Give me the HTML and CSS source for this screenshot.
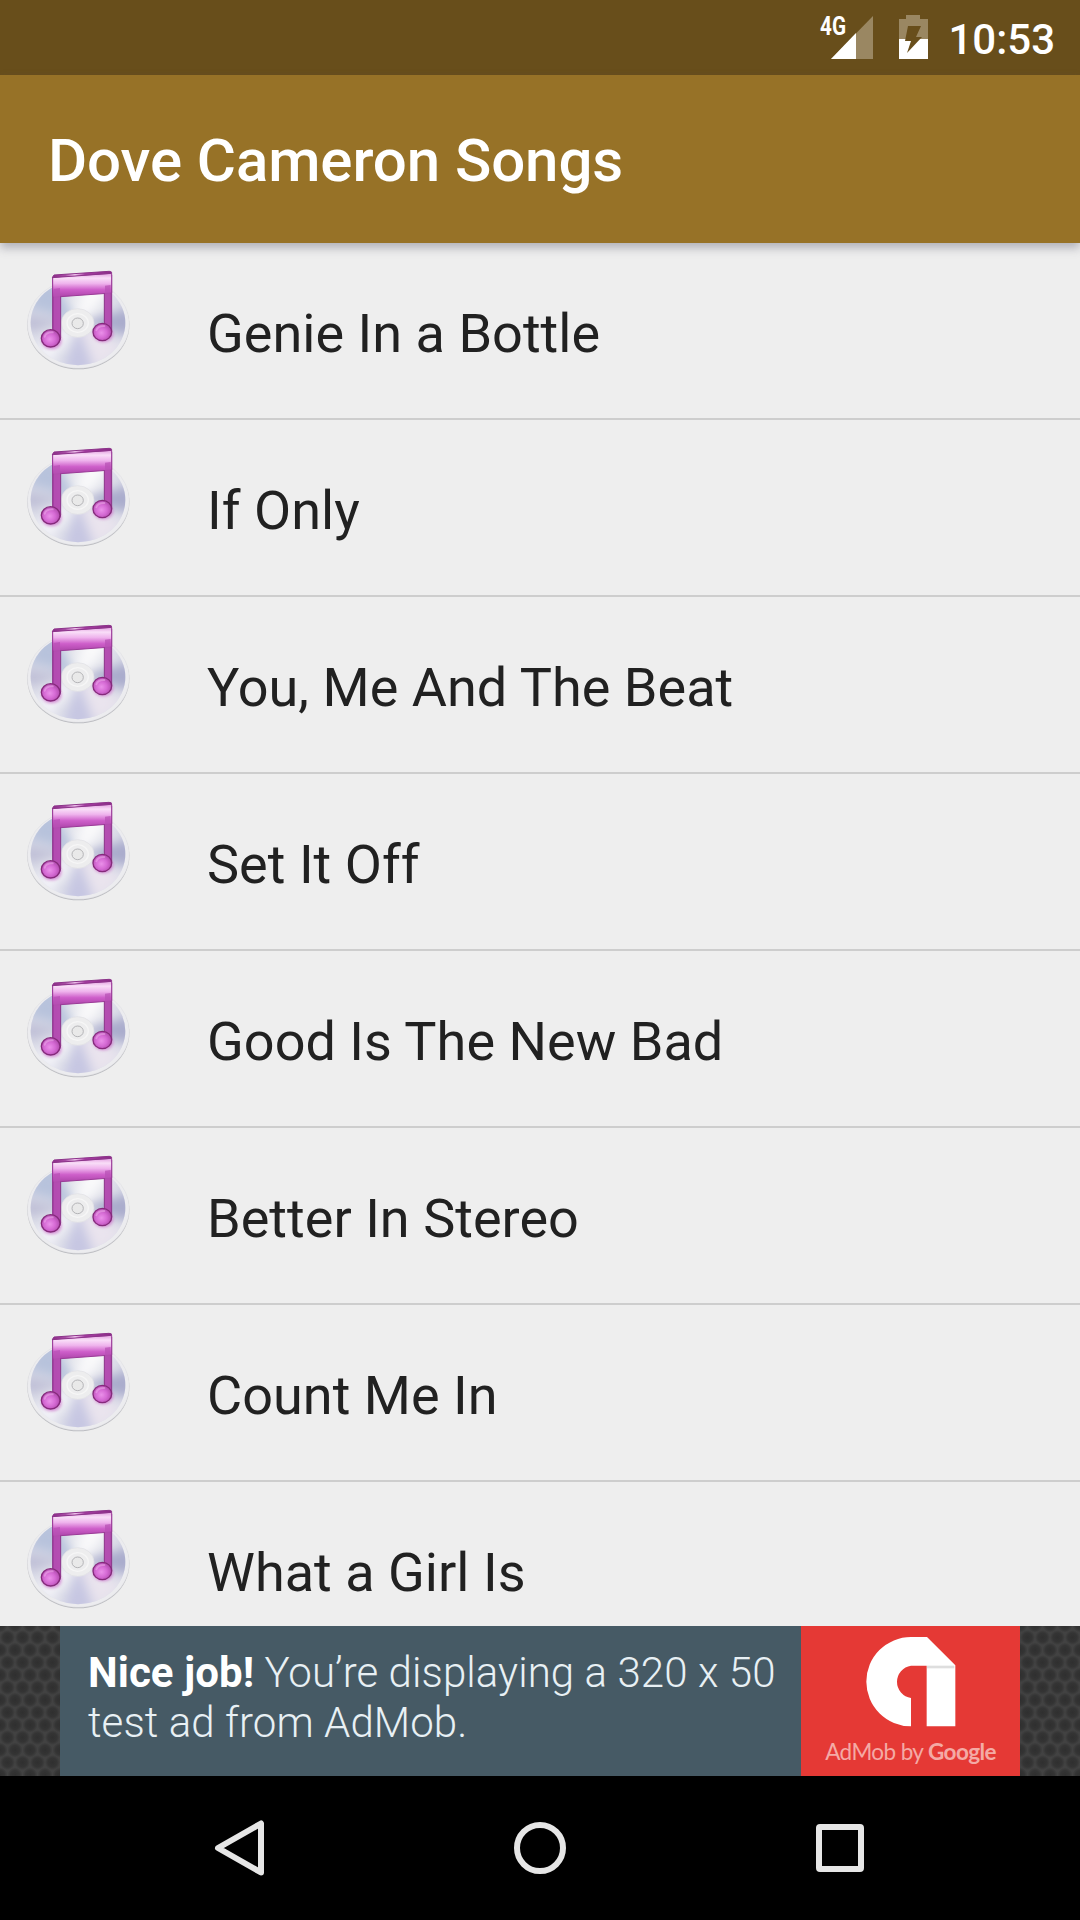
FILE: index.html
```html
<!DOCTYPE html>
<html lang="en">
<head>
<meta charset="utf-8">
<title>Dove Cameron Songs</title>
<link rel="stylesheet" href="styles.css">
</head>
<body>
<svg class="defs" aria-hidden="true">
  <defs>
    <radialGradient id="disc" cx="50%" cy="45%" r="55%">
      <stop offset="0" stop-color="#f4f4f6"/><stop offset=".45" stop-color="#e7e8ee"/><stop offset=".85" stop-color="#dadbe7"/><stop offset="1" stop-color="#dcdde8"/>
    </radialGradient>
    <linearGradient id="beam" x1="0" y1="0" x2="0" y2="1">
      <stop offset="0" stop-color="#e3a0e0"/><stop offset=".2" stop-color="#f9def8"/><stop offset=".42" stop-color="#efb4ed"/><stop offset=".68" stop-color="#ce5fca"/><stop offset="1" stop-color="#ab43a8"/>
    </linearGradient>
    <linearGradient id="edge" x1="0" x2="1">
      <stop offset="0" stop-color="#8c2b88"/><stop offset=".22" stop-color="#a94ba5"/><stop offset=".38" stop-color="#f8d0f5"/><stop offset=".55" stop-color="#a83ca4"/><stop offset="1" stop-color="#8c2b88"/>
    </linearGradient>
    <linearGradient id="stem" x1="0" x2="1">
      <stop offset="0" stop-color="#a13a9f"/><stop offset=".5" stop-color="#c05cbf"/><stop offset="1" stop-color="#a0409d"/>
    </linearGradient>
    <radialGradient id="head" cx="45%" cy="55%" r="58%">
      <stop offset="0" stop-color="#ea90e9"/><stop offset=".5" stop-color="#d66bd5"/><stop offset="1" stop-color="#ad48aa"/>
    </radialGradient>
    <filter id="soft" x="-50%" y="-50%" width="200%" height="200%"><feGaussianBlur stdDeviation="16"/></filter>
    <filter id="glow" x="-50%" y="-50%" width="200%" height="200%"><feGaussianBlur stdDeviation="4"/></filter>
    <clipPath id="discClip"><ellipse cx="234" cy="249" rx="142" ry="127"/></clipPath>
    <symbol id="song" viewBox="0 9 480 525">
      <ellipse cx="235" cy="255" rx="153" ry="133" fill="#b9babf"/>
      <ellipse cx="235" cy="252" rx="153" ry="133" fill="#ececef" stroke="#d9d9dc" stroke-width="1"/>
      <ellipse cx="234" cy="249" rx="142" ry="127" fill="url(#disc)"/>
      <g clip-path="url(#discClip)">
        <g filter="url(#soft)">
          <path d="M234 249 75 200 120 130 160 115Z" fill="#b7c2dc"/>
          <path d="M234 249 70 225 70 275Z" fill="#bdbdd5"/>
          <path d="M234 249 190 400 285 400Z" fill="#c6c6e2"/>
          <path d="M234 249 400 200 400 290Z" fill="#a9abcc"/>
          <path d="M234 249 100 320 150 375Z" fill="#f3f3f8"/>
          <path d="M234 249 290 390 370 320Z" fill="#eae4ee"/>
          <path d="M234 249 360 130 250 100Z" fill="#fafafb"/>
        </g>
      </g>
      <ellipse cx="233" cy="249" rx="49" ry="43" fill="#ededee" stroke="#e0e0e4" stroke-width="2"/>
      <ellipse cx="233" cy="249" rx="32" ry="28" fill="none" stroke="#f6f6f6" stroke-width="4"/>
      <ellipse cx="233" cy="250" rx="17" ry="16" fill="#e9e9e9" stroke="#b4b4b7" stroke-width="3"/>
      <g fill="#ca75ca" opacity=".75" filter="url(#glow)">
        <ellipse cx="155" cy="303" rx="30" ry="25"/><ellipse cx="310" cy="283" rx="30" ry="24"/>
      </g>
      <path d="M158 112H182V294Q179 311 166 314L158 272ZM313 105H335V276Q331 294 320 294L313 253Z" fill="url(#stem)" stroke="#8c348a" stroke-width="3"/>
      <path d="M158 111 335 100V159L182 170 158 172Z" fill="url(#beam)" stroke="#9a3b97" stroke-width="3"/>
      <path d="M161 147 180 144V292H161ZM315 137 332 135V272H315Z" fill="#b852b6" opacity=".75"/>
      <path d="M157 113 162 105 327 94Q337 94 334 100Z" fill="url(#edge)" stroke="#8c348a" stroke-width="3"/>
      <ellipse cx="152" cy="295" rx="28" ry="26" fill="url(#head)" stroke="#852a7b" stroke-width="4"/>
      <ellipse cx="307" cy="276" rx="28" ry="26" fill="url(#head)" stroke="#852a7b" stroke-width="4"/>
      <path d="M134 290Q138 276 158 277M289 271Q293 257 313 258" fill="none" stroke="#f1b1ee" stroke-width="6" stroke-linecap="round" opacity=".5"/>
    </symbol>
    <radialGradient id="hole"><stop offset="0" stop-color="#2f2f2f"/><stop offset=".6" stop-color="#343434"/><stop offset="1" stop-color="#424242"/></radialGradient>
    <pattern id="mesh" width="15" height="25" patternUnits="userSpaceOnUse" patternTransform="translate(0 -1)">
      <rect width="15" height="25" fill="#424242"/>
      <g fill="url(#hole)"><circle cx="7.5" cy="12.5" r="7.500"/><circle cx="0" cy="0" r="7.500"/><circle cx="15" cy="0" r="7.500"/><circle cx="0" cy="25" r="7.500"/><circle cx="15" cy="25" r="7.500"/></g>
    </pattern>
  </defs>
</svg>
<header class="status-bar">
  <svg class="signal" width="54" height="44" viewBox="0 0 54 44">
    <path d="M53 1V44H11Z" fill="#9a8762"/><path d="M36 18V44H11Z" fill="#fff"/>
    <text class="network" x="0" y="19.500" textLength="26" lengthAdjust="spacingAndGlyphs">4G</text>
  </svg>
  <svg class="battery" width="29" height="44" viewBox="0 0 29 44">
    <path d="M0 4H7V0H21V4H29V24H0Z" fill="#9a8762"/><path d="M0 24H29V44H0Z" fill="#fff"/>
    <path d="M9 11H22L17 22H23L8 38 12 26H6Z" fill="#684e1b"/>
  </svg>
  <span class="time">10:53</span>
</header>
<div class="app-bar"><h1 class="title">Dove Cameron Songs</h1></div>
<ul class="songs">
  <li class="song"><svg class="icon"><use href="#song"/></svg><span class="name">Genie In a Bottle</span></li>
  <li class="song"><svg class="icon"><use href="#song"/></svg><span class="name">If Only</span></li>
  <li class="song"><svg class="icon"><use href="#song"/></svg><span class="name">You, Me And The Beat</span></li>
  <li class="song"><svg class="icon"><use href="#song"/></svg><span class="name">Set It Off</span></li>
  <li class="song"><svg class="icon"><use href="#song"/></svg><span class="name">Good Is The New Bad</span></li>
  <li class="song"><svg class="icon"><use href="#song"/></svg><span class="name">Better In Stereo</span></li>
  <li class="song"><svg class="icon"><use href="#song"/></svg><span class="name">Count Me In</span></li>
  <li class="song"><svg class="icon"><use href="#song"/></svg><span class="name">What a Girl Is</span></li>
</ul>
<aside class="ad">
  <svg class="mesh" width="60" height="150"><rect width="60" height="150" fill="url(#mesh)"/></svg>
  <p class="message"><span class="line"><b class="strong">Nice job!</b> You’re displaying a 320 x 50</span><span class="line">test ad from AdMob.</span></p>
  <div class="brand">
    <svg class="logo" width="90" height="90" viewBox="0 0 270 270">
      <path d="M135 0H183L268 85V268H182V86H135A49 49 0 0 0 135 183V268A134 134 0 0 1 135 0Z" fill="#fff"/>
      <path d="M183 86H265V94H183Z" fill="#dedede"/>
    </svg>
    <p class="credit">AdMob by <span class="google">Google</span></p>
  </div>
  <svg class="mesh" width="60" height="150"><rect width="60" height="150" fill="url(#mesh)"/></svg>
</aside>
<nav class="nav-bar">
  <svg class="key" width="60" height="60" viewBox="0 0 60 60"><path d="M8 30 51 5.500V54.500Z"/></svg>
  <svg class="key" width="60" height="60" viewBox="0 0 60 60"><circle cx="30" cy="30" r="23"/></svg>
  <svg class="key" width="60" height="60" viewBox="0 0 60 60"><rect x="9" y="9" width="42" height="42" rx="1"/></svg>
</nav>
</body>
</html>
```
FILE: styles.css
```css
* { box-sizing: border-box; }
body {
  margin: 0;
  width: 1080px;
  height: 1920px;
  display: flex;
  flex-direction: column;
  overflow: hidden;
  background: #eee;
  font-family: Roboto, sans-serif;
}
.defs { position: absolute; width: 0; height: 0; }
.status-bar {
  height: 75px;
  flex: none;
  display: flex;
  justify-content: flex-end;
  align-items: flex-start;
  padding: 15px 25px 0 0;
  background: #684e1b;
  color: #fff;
}
.signal { margin-right: 25px; overflow: visible; }
.network { font-size: 25px; font-weight: 700; fill: #fff; }
.battery { margin-right: 20px; }
.time { padding-top: 1px; font-size: 42px; font-weight: 500; line-height: 48px; }
.app-bar {
  height: 168px;
  flex: none;
  display: flex;
  align-items: center;
  padding: 4px 48px 0;
  background: #977227;
  box-shadow: 0 5px 9px rgba(80, 80, 100, .38);
  z-index: 1;
}
.title { margin: 0; color: #fff; font-size: 60px; font-weight: 500; letter-spacing: -.08px; line-height: 72px; }
.songs { height: 1383px; flex: none; margin: 0; padding: 0; list-style: none; overflow: hidden; }
.song { height: 177px; display: flex; gap: 47px; border-bottom: 2px solid #cdcdcd; }
.icon { width: 160px; height: 175px; flex: none; }
.name { padding-top: 59px; color: #212121; font-size: 54px; letter-spacing: .03px; line-height: 64px; white-space: nowrap; }
.ad { height: 150px; flex: none; display: flex; background: #3b3b3b; }
.mesh { flex: none; display: block; }
.message {
  width: 741px;
  flex: none;
  margin: 0;
  padding: 22px 0 0 28px;
  background: #465a65;
  color: #e8f0f4;
  font-size: 42px;
  font-weight: 300;
  letter-spacing: .08px;
  line-height: 50px;
  white-space: nowrap;
}
.line { display: block; }
.strong { color: #fff; font-weight: 700; }
.brand {
  width: 219px;
  flex: none;
  display: flex;
  flex-direction: column;
  align-items: center;
  padding-top: 11px;
  background: #e53935;
}
.logo { flex: none; margin-left: 1px; }
.credit { margin: 11px 0 0; color: #f4aaa5; font-family: Lato, sans-serif; font-size: 22.500px; letter-spacing: -.6px; line-height: 28px; white-space: nowrap; }
.google { font-weight: 700; }
.nav-bar {
  height: 144px;
  flex: none;
  display: flex;
  justify-content: center;
  align-items: center;
  gap: 240px;
  background: #000;
}
.key { fill: none; stroke: #e6e6e6; stroke-width: 6; stroke-linejoin: round; }
```
